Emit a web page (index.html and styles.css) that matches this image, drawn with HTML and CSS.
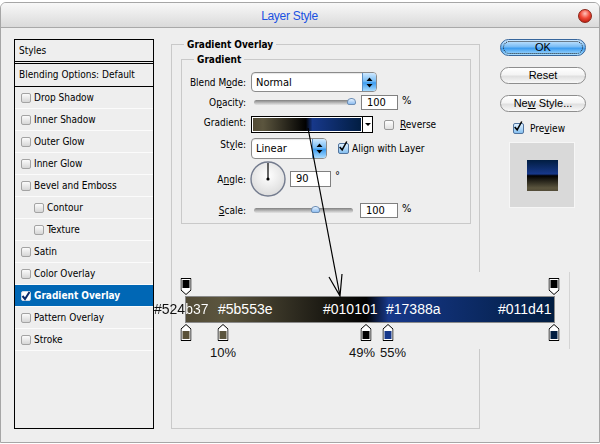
FILE: index.html
```html
<!DOCTYPE html>
<html lang="en">
<head>
  <meta charset="UTF-8" />
  <title>Layer Style</title>
  <link rel="stylesheet" href="styles.css">
</head>
<body>
  <div class="dialog">
    <div class="titlebar">
      <span class="title">Layer Style</span>
      <span class="close"></span>
    </div>

    <div class="main">
      <!-- list of layer styles -->
      <div class="styles-list">
        <div class="sl-head">Styles</div>
        <div class="sl-blend">Blending Options: Default</div>
        <div class="sl-row"><span class="cb"></span>Drop Shadow</div>
        <div class="sl-row"><span class="cb"></span>Inner Shadow</div>
        <div class="sl-row"><span class="cb"></span>Outer Glow</div>
        <div class="sl-row"><span class="cb"></span>Inner Glow</div>
        <div class="sl-row"><span class="cb"></span>Bevel and Emboss</div>
        <div class="sl-row sub"><span class="cb"></span>Contour</div>
        <div class="sl-row sub"><span class="cb"></span>Texture</div>
        <div class="sl-row"><span class="cb"></span>Satin</div>
        <div class="sl-row"><span class="cb"></span>Color Overlay</div>
        <div class="sl-row active">
          <span class="cb on"><svg viewBox="0 0 10 10"><path d="M1.5 5 L4 8 L8.5 1" /></svg></span>Gradient Overlay
        </div>
        <div class="sl-row"><span class="cb"></span>Pattern Overlay</div>
        <div class="sl-row"><span class="cb"></span>Stroke</div>
      </div>

      <fieldset class="group outer">
        <legend>Gradient Overlay</legend>
        <fieldset class="group inner">
          <legend>Gradient</legend>

          <div class="frow r-blend">
            <label>Blend M<u>o</u>de:</label>
            <div class="select blend">
              <span>Normal</span>
              <span class="sel-btn"><svg viewBox="0 0 7 11"><path d="M3.5 0.5 L6.5 4 H0.5 Z M3.5 10.5 L6.5 7 H0.5 Z" /></svg></span>
            </div>
          </div>

          <div class="frow r-opacity">
            <label>O<u>p</u>acity:</label>
            <div class="slider"><span class="thumb op"></span></div>
            <div class="num">100</div>
            <span class="unit">%</span>
          </div>

          <div class="frow r-grad">
            <label>Gradient:</label>
            <div class="gswatch"></div>
            <div class="gdrop"><span class="tri"></span></div>
            <span class="acb off"></span>
            <span class="cb-label"><u>R</u>everse</span>
          </div>

          <div class="frow r-style">
            <label>St<u>y</u>le:</label>
            <div class="select style">
              <span>Linear</span>
              <span class="sel-btn"><svg viewBox="0 0 7 11"><path d="M3.5 0.5 L6.5 4 H0.5 Z M3.5 10.5 L6.5 7 H0.5 Z" /></svg></span>
            </div>
            <span class="acb"><svg viewBox="0 0 12 13"><path d="M2 7 L5 10.5 L10.5 0.5" /></svg></span>
            <span class="cb-label tight">Align with Layer</span>
          </div>

          <div class="frow r-angle">
            <label>A<u>n</u>gle:</label>
            <svg class="dial" viewBox="0 0 36 36">
              <defs>
                <radialGradient id="dialfill" cx="50%" cy="40%" r="60%">
                  <stop offset="0" stop-color="#ffffff" />
                  <stop offset="1" stop-color="#dcdcdc" />
                </radialGradient>
              </defs>
              <circle cx="18" cy="18" r="17" fill="url(#dialfill)" stroke="#737b8e" stroke-width="1.4" />
              <line x1="18" y1="18" x2="18" y2="2" stroke="#000" stroke-width="1.2" />
              <circle cx="18" cy="18" r="1.6" fill="#000" />
            </svg>
            <div class="num angle">90</div>
            <span class="unit deg">°</span>
          </div>

          <div class="frow r-scale">
            <label><u>S</u>cale:</label>
            <div class="slider short"><span class="thumb sc"></span></div>
            <div class="num wide">100</div>
            <span class="unit">%</span>
          </div>
        </fieldset>
      </fieldset>

      <div class="side">
        <div class="btn ok">OK</div>
        <div class="btn">Reset</div>
        <div class="btn">Ne<u>w</u> Style...</div>
        <div class="preview-row">
          <span class="acb"><svg viewBox="0 0 12 13"><path d="M2 7 L5 10.5 L10.5 0.5" /></svg></span>
          <span>Pre<u>v</u>iew</span>
        </div>
        <div class="preview-box"><div class="preview-swatch"></div></div>
      </div>
    </div>

    <!-- gradient editor strip pasted over the dialog -->
    <div class="demo">
      <div class="stops">
        <span class="stop" style="left:0%"><svg viewBox="0 0 11 17"><path class="ol" d="M0.5 0.5 H10.5 V12 L5.5 16.5 L0.5 12 Z" /><rect x="2" y="2" width="7" height="8" fill="#000" /></svg></span>
        <span class="stop" style="left:100%"><svg viewBox="0 0 11 17"><path class="ol" d="M0.5 0.5 H10.5 V12 L5.5 16.5 L0.5 12 Z" /><rect x="2" y="2" width="7" height="8" fill="#000" /></svg></span>
      </div>
      <div class="bar">
        <span class="hex split" style="left:-32px">#524b37</span>
        <span class="hex" style="left:32px">#5b553e</span>
        <span class="hex" style="left:137px">#010101</span>
        <span class="hex" style="left:200px">#17388a</span>
        <span class="hex" style="left:312px">#011d41</span>
      </div>
      <div class="stops low">
        <span class="stop" style="left:0%"><svg viewBox="0 0 11 17"><path class="ol" d="M5.5 0.5 L10.5 5 V16.5 H0.5 V5 Z" /><rect x="2" y="7" width="7" height="8" fill="#5a5138" /></svg></span>
        <span class="stop" style="left:10%"><svg viewBox="0 0 11 17"><path class="ol" d="M5.5 0.5 L10.5 5 V16.5 H0.5 V5 Z" /><rect x="2" y="7" width="7" height="8" fill="#5b553e" /></svg></span>
        <span class="stop" style="left:49%"><svg viewBox="0 0 11 17"><path class="ol" d="M5.5 0.5 L10.5 5 V16.5 H0.5 V5 Z" /><rect x="2" y="7" width="7" height="8" fill="#010101" /></svg></span>
        <span class="stop" style="left:55%"><svg viewBox="0 0 11 17"><path class="ol" d="M5.5 0.5 L10.5 5 V16.5 H0.5 V5 Z" /><rect x="2" y="7" width="7" height="8" fill="#17388a" /></svg></span>
        <span class="stop" style="left:100%"><svg viewBox="0 0 11 17"><path class="ol" d="M5.5 0.5 L10.5 5 V16.5 H0.5 V5 Z" /><rect x="2" y="7" width="7" height="8" fill="#011d41" /></svg></span>
      </div>
      <div class="pcts">
        <span class="pct" style="left:37px">10%</span>
        <span class="pct" style="left:176px">49%</span>
        <span class="pct" style="left:207px">55%</span>
      </div>
    </div>
  </div>

  <!-- arrow drawn over everything -->
  <svg class="arrow" viewBox="0 0 600 444">
    <path d="M308 128 L340 296 M329 277 L340 296 L342 274" />
  </svg>
</body>
</html>
```

FILE: styles.css
```css
* {
  box-sizing: border-box;
}

body {
  margin: 0;
  width: 600px;
  height: 444px;
  overflow: hidden;
  position: relative;
  background: #ffffff;
  font-family: Tahoma, "DejaVu Sans Condensed", "Liberation Sans", sans-serif;
  font-size: 10px;
  color: #000;
}

u {
  text-decoration-thickness: 1px;
  text-underline-offset: 1px;
}

.dialog {
  margin-top: 2px;
  height: 441px;
  border: 1px solid #a6a6a6;
  border-radius: 6px 6px 0 0;
  background: #eeeeee;
  position: relative;
}

/* title bar */
.titlebar {
  height: 25px;
  display: flex;
  align-items: center;
  border-bottom: 1px solid #a9a9a9;
  border-radius: 5px 5px 0 0;
  background: linear-gradient(#f8f8f8, #dadada);
}

.title {
  flex: 1;
  text-align: center;
  padding-top: 2px;
  font-family: "Liberation Sans", Arial, sans-serif;
  font-size: 12px;
  letter-spacing: -0.3px;
  color: #1b52e2;
}

.close {
  width: 14px;
  height: 14px;
  margin: 2px 7px 0 0;
  border-radius: 50%;
  border: 1px solid #8a2418;
  background: radial-gradient(circle at 50% 30%, #ffc4bc 0, #f24a38 45%, #a50d00 100%);
}

.main {
  display: flex;
  align-items: flex-start;
  padding: 11px 0 0 13px;
}

/* left styles list */
.styles-list {
  flex: none;
  width: 140px;
  height: 390px;
  border: 1px solid #000;
}

.sl-head {
  height: 24px;
  line-height: 21px;
  padding-left: 4px;
  border-bottom: 3px double #000;
}

.sl-blend {
  height: 23px;
  line-height: 22px;
  padding-left: 4px;
  border-bottom: 1px solid #000;
}

.sl-row {
  height: 22px;
  display: flex;
  align-items: center;
  gap: 3px;
  padding-left: 6px;
  border-bottom: 1px solid #fbfbfb;
}

.sl-row.sub {
  padding-left: 19px;
}

.sl-row.active {
  background: #0067b5;
  color: #fff;
  font-weight: bold;
}

.cb {
  flex: none;
  width: 10px;
  height: 10px;
  border: 1px solid #a3a3a3;
  border-radius: 2px;
  background: linear-gradient(#fbfbfb, #d6d6d6);
}

.cb.on {
  background: #fff;
  border-color: #d0d8e4;
  display: flex;
}

.cb svg {
  width: 10px;
  height: 10px;
  margin: -1px;
  fill: none;
  stroke: #0a2a6a;
  stroke-width: 2;
}

/* fieldsets */
.group {
  margin: 0;
  padding: 0;
  min-width: 0;
  border: 1px solid #c9c9c9;
}

.group legend {
  padding: 0 3px;
  line-height: 13px;
  font-weight: bold;
}

.outer {
  flex: none;
  margin: -1px 0 0 17px;
  width: 309px;
  height: 391px;
}

.outer > legend {
  margin-left: 12px;
}

.inner {
  margin: 2px 0 0 9px;
  width: 290px;
  padding: 6px 0 5px 0;
}

.inner > legend {
  margin-left: 12px;
}

.frow {
  display: flex;
  align-items: center;
}

.frow label {
  flex: none;
  width: 64px;
  margin-right: 5px;
  text-align: right;
}

.r-blend { height: 20px; }
.r-opacity { height: 15px; margin-top: 3px; }
.r-grad { height: 17px; margin-top: 6px; }
.r-style { height: 21px; margin-top: 5px; }
.r-angle { height: 36px; margin-top: 2px; }
.r-scale { height: 15px; margin-top: 6px; }

.r-grad label,
.r-style label {
  align-self: flex-start;
  padding-top: 1px;
}

/* aqua popup menus */
.select {
  height: 100%;
  display: flex;
  align-items: center;
  padding-left: 4px;
  border: 1px solid #8b8b8b;
  border-radius: 4px;
  background: #fff;
  font-size: 11px;
  box-shadow: inset 0 1px 1px rgba(0, 0, 0, 0.1);
}

.select.blend { width: 126px; }
.select.style { width: 76px; }

.sel-btn {
  margin-left: auto;
  width: 14px;
  height: 100%;
  display: flex;
  align-items: center;
  justify-content: center;
  border-left: 1px solid #5a8ec4;
  border-radius: 0 3px 3px 0;
  background: linear-gradient(#cfe9ff 0%, #79bdf5 45%, #3c9cf0 55%, #a9dcff 100%);
}

.sel-btn svg {
  width: 7px;
  height: 11px;
  fill: #000;
}

/* sliders */
.slider {
  position: relative;
  width: 101px;
  height: 5px;
  margin-left: 3px;
  border-radius: 3px;
  background: linear-gradient(#808080, #c8c8c8 70%, #e4e4e4);
}

.slider.short {
  width: 99px;
}

.thumb {
  position: absolute;
  top: -2px;
  width: 9px;
  height: 7px;
  border: 1px solid #6d8fb6;
  border-radius: 4px 4px 2px 2px;
  background: linear-gradient(#e6f2ff, #8fbef0);
}

.thumb.op { left: 93px; }
.thumb.sc { left: 57px; }

.num {
  height: 15px;
  width: 37px;
  margin-left: 6px;
  padding-left: 5px;
  line-height: 13px;
  border: 1px solid #808080;
  background: #fff;
  font-size: 11px;
}

.num.wide {
  width: 38px;
  margin-left: 7px;
}

.num.angle {
  height: 16px;
  width: 41px;
  margin-left: 4px;
}

.unit {
  margin-left: 4px;
  align-self: flex-start;
  font-size: 11px;
  line-height: 11px;
}

.unit.deg {
  margin-top: 9px;
}

/* gradient picker */
.gswatch {
  width: 112px;
  height: 17px;
  border: 1px solid #000;
  box-shadow: inset 0 0 0 1px #fff;
  background: linear-gradient(90deg, #524b37 0%, #5b553e 10%, #010101 49%, #17388a 55%, #011d41 100%);
}

.gdrop {
  width: 10px;
  height: 17px;
  display: flex;
  align-items: center;
  justify-content: center;
  border: 1px solid #000;
  border-left: 0;
  background: #fff;
}

.tri {
  border-left: 3px solid transparent;
  border-right: 3px solid transparent;
  border-top: 3px solid #000;
}

.acb {
  flex: none;
  width: 11px;
  height: 11px;
  margin-left: 11px;
  border: 1px solid #51749e;
  border-radius: 2px;
  background: linear-gradient(#dff0ff, #86c0f0);
  display: flex;
}

.acb.off {
  width: 10px;
  height: 10px;
  border-color: #9a9a9a;
  background: linear-gradient(#ffffff, #e0e0e0);
}

.acb svg {
  width: 12px;
  height: 13px;
  margin: -4px 0 0 -1px;
  fill: none;
  stroke: #000;
  stroke-width: 1.8;
}

.cb-label {
  margin-left: 6px;
}

.cb-label.tight {
  margin-left: 3px;
}

.dial {
  width: 36px;
  height: 36px;
  margin-left: -1px;
}

/* right column */
.side {
  flex: none;
  width: 86px;
  margin-left: 20px;
  display: flex;
  flex-direction: column;
}

.btn {
  height: 17px;
  margin-bottom: 11px;
  border: 1px solid #8e8e8e;
  border-radius: 9px;
  text-align: center;
  line-height: 15px;
  font-family: "Liberation Sans", Arial, sans-serif;
  font-size: 11px;
  background: linear-gradient(#ffffff 0%, #f4f4f4 45%, #e0e0e0 55%, #f8f8f8 100%);
}

.btn.ok {
  position: relative;
  border-color: #37669c;
  background: linear-gradient(#cfe9ff 0%, #78bcf5 45%, #3d9cef 55%, #aadeff 100%);
}

.btn.ok::after {
  content: "";
  position: absolute;
  inset: 1px 2px;
  border: 1px dotted #1a1a1a;
  border-radius: 7px;
}

.preview-row {
  height: 11px;
  display: flex;
  align-items: center;
  gap: 6px;
  margin-left: 2px;
}

.preview-box {
  width: 66px;
  height: 66px;
  margin: 8px 0 0 9px;
  display: flex;
  align-items: center;
  justify-content: center;
  border: 1px solid #f6f6f6;
  background: #d9d9d9;
}

.preview-swatch {
  width: 31px;
  height: 31px;
  margin-top: 1px;
  background: linear-gradient(to top, #524b37 0%, #5b553e 10%, #010101 49%, #17388a 55%, #011d41 100%);
}

/* pasted gradient editor strip */
.demo {
  position: absolute;
  left: 172px;
  top: 269px;
  width: 397px;
  height: 77px;
  padding: 6px 0 0 13px;
  background: #eeeeee;
  border-right: 1px solid #d4d4d4;
  font-family: "Liberation Sans", Arial, sans-serif;
}

.stops {
  position: relative;
  width: 368px;
  height: 17px;
}

.stops.low {
  margin-top: 1px;
}

.stop {
  position: absolute;
  top: 0;
  width: 11px;
  height: 17px;
  transform: translateX(-50%);
}

.stop svg {
  display: block;
  width: 11px;
  height: 17px;
}

.stop .ol {
  fill: #fff;
  stroke: #000;
  stroke-width: 1;
}

.bar {
  position: relative;
  width: 370px;
  height: 27px;
  margin: 1px 0 0 -1px;
  border: 1px solid #8a8a8a;
  background: linear-gradient(90deg, #524b37 0%, #5b553e 10%, #010101 49%, #17388a 55%, #011d41 100%);
}

.hex {
  position: absolute;
  top: 3px;
  font-size: 14px;
  line-height: 18px;
  color: #fff;
  white-space: nowrap;
}

.hex.split {
  color: transparent;
  background: linear-gradient(90deg, #111 31px, #fff 31px);
  -webkit-background-clip: text;
  background-clip: text;
}

.pcts {
  position: relative;
  width: 368px;
  height: 14px;
  margin-top: 5px;
}

.pct {
  position: absolute;
  top: 0;
  transform: translateX(-50%);
  font-size: 13px;
  line-height: 14px;
  color: #111;
}

.arrow {
  position: absolute;
  top: 0;
  left: 0;
  width: 600px;
  height: 444px;
  pointer-events: none;
}

.arrow path {
  fill: none;
  stroke: #000;
  stroke-width: 1.2;
}
```
